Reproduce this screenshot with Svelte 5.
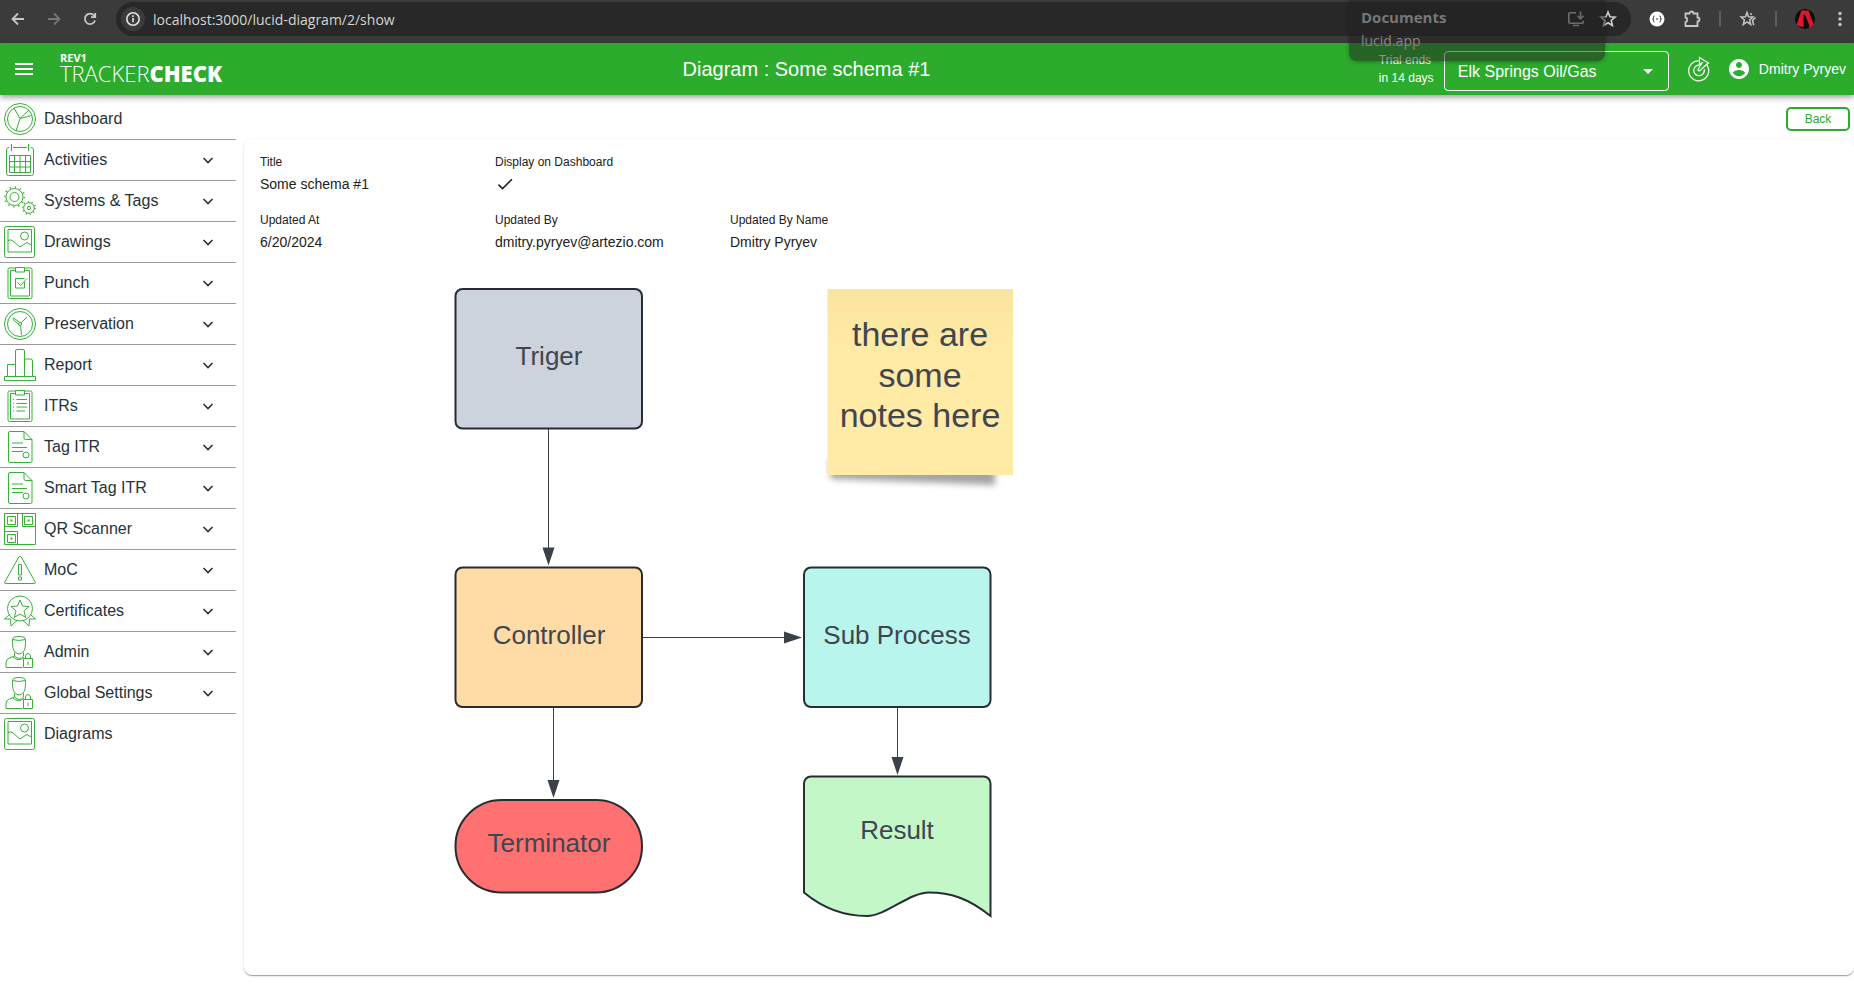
<script>

  let project = "Elk Springs Oil/Gas";

  const picture = `
    <rect x="0.5" y="0.5" width="30" height="31" rx="2" />
    <path d="M4 3.5h23.500v22.500h-23.500zM4 14.500q3-1.500 5 .500l7 6 6-4q2-1 3 1l2.500.500" />
    <circle cx="20.500" cy="10" r="4" />`;

  const clipboard = `
    <path d="M11.500 1h-6a1.500 1.500 0 0 0-1.500 1.500v27.500a1.500 1.500 0 0 0 1.500 1.500h21a1.500 1.500 0 0 0 1.500-1.500v-27.500a1.500 1.500 0 0 0-1.500-1.500h-6" />
    <path d="M11.500 3.500h-5v25.500h19v-25.500h-5M11.500.500h9v4.500h-9z" />`;

  const sheet = `
    <path d="M20 .5h-14a1.500 1.500 0 0 0-1.500 1.500v28a1.500 1.500 0 0 0 1.500 1.500h20.500a1.500 1.500 0 0 0 1.500-1.500v-21.500zv6.500a1.500 1.500 0 0 0 1.500 1.500h6.500" />
    <path d="M8 12h11M8 16.500h15M8 20.500h11" />
    <circle cx="22" cy="24" r="3" />`;

  const person = `
    <path d="M8.500 3.500q0-3 6.500-3t6.500 3c0 8 0 13-6.500 14.500-6.500-1.500-6.500-6.500-6.500-14.500zq6 2 13 0" />
    <path d="M10.500 16.500v3.500l-5 2q-3.500 1-3.500 5v4.500h16.500M10.500 20q5 5 9 0v-3.500M9 21q6 5.500 11 0" />
    <path d="M19.500 22.500h9v9h-9zM21.500 22v-2q.5-2.500 2.500-2.500t2.500 2.500v2.500M24 25.500v3.500" />`;

  const icons = {
    dashboard: `
      <circle cx="16" cy="16" r="15.500" /><circle cx="16" cy="16" r="12.500" />
      <path d="M16 15.500l-6-10.500M16 15.500l-4 12.500M16 15.500l9-8.500M16 15.500l11.500-3" />`,
    activities: `
      <path d="M7.500 0v7M24.500 0v7M9 3.500h14M5 3.500q-2.500 0-2.500 2.500v23.500q0 2 2 2h23q2 0 2-2v-23.500q0-2.500-2.500-2.500" />
      <path d="M5.500 11.500h21v17h-21zM10.500 11.500v17M16 11.500v17M21.500 11.500v17M5.500 17.500h21M5.500 23h21" />`,
    systems: `
      <circle cx="10.500" cy="12" r="8.500" /><circle cx="10.500" cy="12" r="4.500" />
      <circle cx="10.500" cy="12" r="9.800" stroke-width="1.800" stroke-dasharray="1.200 3.930" />
      <circle cx="25" cy="23" r="5.300" /><circle cx="25" cy="23" r="1.700" />
      <circle cx="25" cy="23" r="6.300" stroke-width="1.500" stroke-dasharray="1 2.958" />`,
    picture,
    punch: clipboard + `<path d="M20.500 15v6h-9v-9.500h9M13.500 15.500l3 3 6.500-7" />`,
    preservation: `
      <circle cx="16" cy="16" r="15.500" /><circle cx="16" cy="16" r="12.500" />
      <circle cx="16" cy="16" r="1.500" />
      <path d="M17 15l6-6M16.500 17l1 10M15 16.500l-6-5 .5-1.500 6.500 4.500" />`,
    report: `
      <path d="M.5 27.500h31v4h-31zM3.500 27.500v-12h8v12M11.500 27.500v-25.500q0-1.500 1.500-1.500h6q1.500 0 1.500 1.500v25.500M20.500 10h6q2 0 2 2v15.500" />`,
    itrs: clipboard + `<path d="M12.500 9.500h10.500M12.500 13.500h10.500M12.500 17h10.500M12.500 21h8.500M9 9.500h1M9 13.500h1M9 17h1M9 21h1" />`,
    sheet,
    qr: `
      <path d="M.5.500h31v31h-31zM13.500.500v13h-13M18.500.500v13h13M.5 18.500h13v13" />
      <path d="M3.500 3.500h8v8h-8zM20.500 3.500h8v8h-8zM3.500 21.500h8v8h-8z" />
      <path d="M6.500 7.500h2M23.500 7.500h2M6.500 25.500h2" stroke-width="2" />`,
    moc: `
      <path d="M14.800 3q1.200-2 2.400 0l14 25q.8 1.500-1 1.500h-28.400q-1.800 0-1-1.500z" />
      <path d="M14.500 10.500h3v10.500h-3zM14.500 23h3v3h-3z" />`,
    certificates: `
      <circle cx="16" cy="13.500" r="12.500" />
      <path d="M16 5l2.500 6 6.500.500-5 4.500 1.800 6.500-5.800-3.500-5.800 3.500 1.800-6.500-5-4.500 6.500-.500z" />
      <path d="M5 20l-4.500 4h6l.5 7 6.500-6M27 20l4.500 4h-6l-.5 7-6.500-6" />`,
    person
  };

  const menu = [
    { label: "Dashboard", icon: "dashboard", link: true },
    { label: "Activities", icon: "activities" },
    { label: "Systems & Tags", icon: "systems" },
    { label: "Drawings", icon: "picture" },
    { label: "Punch", icon: "punch" },
    { label: "Preservation", icon: "preservation" },
    { label: "Report", icon: "report" },
    { label: "ITRs", icon: "itrs" },
    { label: "Tag ITR", icon: "sheet" },
    { label: "Smart Tag ITR", icon: "sheet" },
    { label: "QR Scanner", icon: "qr" },
    { label: "MoC", icon: "moc" },
    { label: "Certificates", icon: "certificates" },
    { label: "Admin", icon: "person" },
    { label: "Global Settings", icon: "person" },
    { label: "Diagrams", icon: "picture", link: true }
  ];

</script>


<style>
  :global(body) {
    margin: 0;
    background-color: #fff;
    font-family: "Liberation Sans", Arial, sans-serif;
  }

  .page {
    min-height: 100vh;
    display: flex;
    flex-direction: column;
  }

  svg {
    display: block;
    flex: none;
  }

  button {
    font: inherit;
    color: inherit;
    background: none;
    border: none;
    padding: 0;
    cursor: pointer;
  }

  .browser {
    position: relative;
    height: 43px;
    display: flex;
    align-items: center;
    background-color: #3b3b3b;
    color: #c7c7c7;
    font-family: "Open Sans", "Noto Sans", sans-serif;
    font-size: 14px;
    box-sizing: border-box;
    padding: 0 7px 5px 10px;
  }

  .tools {
    display: flex;
    align-items: center;
    gap: 20px;
    width: 106px;
  }

  .tools .off {
    color: #777;
  }

  .address {
    flex: 1;
    height: 34px;
    display: flex;
    align-items: center;
    background-color: #282828;
    border-radius: 17px;
    box-sizing: border-box;
    padding: 0 14px 0 5px;
  }

  .site {
    width: 24px;
    height: 24px;
    display: flex;
    align-items: center;
    justify-content: center;
    border-radius: 50%;
    background-color: #3b3b3b;
    color: #e3e3e3;
    margin-right: 8px;
  }

  .address input {
    flex: 1;
    min-width: 0;
    font: inherit;
    color: #d5d5d5;
    background: none;
    border: none;
    padding: 0;
    outline: none;
  }

  .address .actions {
    display: flex;
    gap: 14px;
  }

  .extensions {
    display: flex;
    align-items: center;
    gap: 18px;
    margin-left: 18px;
  }

  .extensions i {
    width: 2px;
    height: 16px;
    background-color: #5c5c5c;
  }

  .hover-card {
    position: absolute;
    z-index: 3;
    top: 0;
    right: 249px;
    width: 256px;
    height: 61px;
    box-sizing: border-box;
    padding: 6px 12px;
    border-radius: 0 0 8px 8px;
    background-color: rgba(32, 32, 32, 0.5);
    box-shadow: 0 1px 4px rgba(0, 0, 0, 0.3);
    color: #858585;
    font-size: 14px;
    line-height: 23px;
    pointer-events: none;
  }

  .hover-card strong {
    display: block;
    font-size: 15px;
    font-weight: 700;
    color: #777;
  }

  header {
    position: relative;
    z-index: 1;
    height: 52px;
    display: flex;
    align-items: center;
    justify-content: space-between;
    box-sizing: border-box;
    padding: 0 8px 0 12px;
    background-color: #2cab2c;
    color: #fff;
    box-shadow: 0 2px 4px -1px rgba(0, 0, 0, 0.2), 0 4px 5px rgba(0, 0, 0, 0.14), 0 1px 10px rgba(0, 0, 0, 0.12);
  }

  .brand,
  .account,
  .user {
    display: flex;
    align-items: center;
  }

  .brand {
    gap: 24px;
    padding-right: 12px;
  }

  .logo {
    font-family: "Open Sans", "Noto Sans", sans-serif;
    font-size: 22px;
    font-weight: 300;
    line-height: 20px;
    color: #fff;
    text-decoration: none;
    padding-bottom: 3px;
  }

  .logo small {
    display: block;
    font-size: 11px;
    font-weight: 700;
    line-height: 10px;
  }

  .logo b {
    font-weight: 800;
  }

  h1 {
    font-size: 20px;
    font-weight: 400;
    line-height: 24px;
    margin: 0;
  }

  .trial {
    width: 55px;
    margin-right: 10px;
    font-size: 12px;
    line-height: 18px;
  }

  .project {
    position: relative;
    width: 225px;
    margin: 4px 18px 0 0;
  }

  .project select {
    width: 100%;
    height: 40px;
    appearance: none;
    font: inherit;
    font-size: 16px;
    color: #fff;
    background: none;
    border: 1px solid #fff;
    border-radius: 4px;
    padding: 0 32px 0 13px;
  }

  .project svg {
    position: absolute;
    top: 8px;
    right: 9px;
    pointer-events: none;
  }

  .user {
    gap: 8px;
    font-size: 14px;
    margin-left: 16px;
  }

  .body {
    flex: 1;
    display: flex;
  }

  nav {
    width: 236px;
    flex: none;
    padding-top: 4px;
  }

  ul {
    list-style: none;
    padding: 0;
    margin: 0;
  }

  li {
    border-bottom: 1px solid #9b9b9b;
  }

  li:last-child {
    border-bottom: none;
  }

  .item {
    width: 100%;
    height: 40px;
    display: flex;
    align-items: center;
    gap: 8px;
    box-sizing: border-box;
    padding: 0 20px 0 4px;
    font-size: 16px;
    line-height: 20px;
    color: #263238;
    text-decoration: none;
    text-align: left;
  }

  .item span {
    flex: 1;
  }

  .item:hover {
    background-color: rgba(0, 0, 0, 0.04);
  }

  .icon {
    fill: none;
    stroke: #36b036;
    stroke-width: 1;
  }

  main {
    flex: 1;
    min-width: 0;
    display: flex;
    flex-direction: column;
    padding: 12px 0 16px 8px;
  }

  .back {
    align-self: flex-end;
    width: 64px;
    height: 24px;
    margin: 0 4px 8px 0;
    border: 2px solid #2cab2c;
    border-radius: 5px;
    color: #2cab2c;
    font-size: 12px;
  }

  .card {
    flex: 1;
    padding: 15px 16px;
    border-radius: 8px;
    background-color: #fff;
    color: #212121;
    box-shadow: 0 2px 1px -1px rgba(0, 0, 0, 0.2), 0 1px 1px rgba(0, 0, 0, 0.14), 0 1px 3px rgba(0, 0, 0, 0.12);
  }

  dl {
    display: grid;
    grid-template-columns: repeat(3, 235px);
    row-gap: 18px;
    margin: 0 0 18px 0;
  }

  .wide {
    grid-column: span 2;
  }

  dt {
    font-size: 12px;
    line-height: 16px;
    margin-bottom: 4px;
  }

  dd {
    font-size: 14px;
    line-height: 20px;
    height: 20px;
    margin: 0;
  }

  .diagram {
    max-width: 100%;
  }

  .shape {
    stroke: #282c33;
    stroke-width: 2;
  }

  .link {
    stroke: #3a414a;
    stroke-width: 1;
    fill: none;
  }

  .head {
    fill: #3a414a;
  }

  .diagram text {
    fill: #3f4650;
    font-size: 26px;
    text-anchor: middle;
  }

  .diagram .note {
    font-size: 34px;
  }
</style>

<div class="page">
  <div class="browser">
    <div class="tools">
      <button type="button" aria-label="Back to previous page">
        <svg width="16" height="16" viewBox="0 0 16 16" fill="none" stroke="currentColor" stroke-width="1.800"><path d="M14 8H3M8 2.500L2.500 8 8 13.500" /></svg>
      </button>
      <button type="button" class="off" aria-label="Forward">
        <svg width="16" height="16" viewBox="0 0 16 16" fill="none" stroke="currentColor" stroke-width="1.800"><path d="M2 8h11M8 2.500L13.500 8 8 13.500" /></svg>
      </button>
      <button type="button" aria-label="Reload">
        <svg width="16" height="16" viewBox="0 0 16 16" fill="none" stroke="currentColor" stroke-width="1.800"><path d="M13 9.500A5.200 5.200 0 1 1 12 4.500l1 1.200M13.200 2v4.200H9" /></svg>
      </button>
    </div>
    <div class="address">
      <button type="button" class="site" aria-label="Site information">
        <svg width="16" height="16" viewBox="0 0 16 16" fill="none" stroke="currentColor" stroke-width="1.600"><circle cx="8" cy="8" r="6.200" /><path d="M8 7v4.200M8 4.300v1.700" /></svg>
      </button>
      <input aria-label="Address" value="localhost:3000/lucid-diagram/2/show" />
      <div class="actions">
        <svg width="18" height="18" viewBox="0 0 18 18" fill="none" stroke="#b8b8b8" stroke-width="1.600"><path d="M9 2.800H2.800a1 1 0 0 0-1 1v8.400a1 1 0 0 0 1 1h12.400a1 1 0 0 0 1-1v-1.500M6 15.500h6M13.500 1.500v7M10.500 5.800l3 3 3-3" /></svg>
        <svg width="18" height="18" viewBox="0 0 18 18" fill="none" stroke="#d0d0d0" stroke-width="1.600"><path d="M9 2l2 4.700 5 .5-3.800 3.300 1.200 5L9 12.800 4.600 15.500l1.200-5L2 7.200l5-.5z" /></svg>
      </div>
    </div>
    <div class="extensions">
      <svg width="16" height="16" viewBox="0 0 16 16"><circle cx="8" cy="8" r="7.500" fill="#fff" /><path d="M5.500 5q-1.300 0-1 1.500T3.500 8q1.300 0 1 1.500t1 1.500M10.500 5q1.300 0 1 1.500T12.500 8q-1.300 0-1 1.500t-1 1.500M6.800 8h2.400" fill="none" stroke="#333" /></svg>
      <svg width="18" height="18" viewBox="0 0 18 18" fill="none" stroke="#c7c7c7" stroke-width="1.800"><path d="M2.500 3.500h4a2 2 0 0 1 4 0h4v4a2 2 0 0 1 0 4v4.500h-12v-4a2.300 2.300 0 0 0 0-4.500z" /></svg>
      <i></i>
      <svg width="18" height="18" viewBox="0 0 18 18" fill="none" stroke="#c7c7c7" stroke-width="1.500"><path d="M8 2.500l1.500 4.200 4.500.3-3.400 3 1.100 4.500L8 12l-3.700 2.500 1.100-4.500L2 7l4.500-.3zM11.500 3l1 2M16.500 7.500l-3 2.800 1.200 5" /></svg>
      <i></i>
      <svg width="20" height="20" viewBox="0 0 20 20"><circle cx="10" cy="10" r="10" fill="#0b0b0b" /><path d="M1.500 15.500L6.500 1.500h7L18.500 15.500q-1.500 2.500-4 3.500L8.500 5 8.800 17.500Q4 18.500 1.500 15.500z" fill="#d9182d" /><path d="M8.500 5.500h1.500l4.500 11.500h-2z" fill="#0b0b0b" /></svg>
      <button type="button" aria-label="Browser menu">
        <svg width="14" height="16" viewBox="0 0 14 16" fill="#c7c7c7"><circle cx="7" cy="2.500" r="1.700" /><circle cx="7" cy="8" r="1.700" /><circle cx="7" cy="13.500" r="1.700" /></svg>
      </button>
    </div>
    <div class="hover-card"><strong>Documents</strong>lucid.app</div>
  </div>

  <header>
    <div class="brand">
      <button type="button" aria-label="Toggle menu">
        <svg width="24" height="24" viewBox="0 0 24 24" fill="#fff"><path d="M3 18h18v-2H3zm0-5h18v-2H3zm0-7v2h18V6z" /></svg>
      </button>
      <a class="logo" href="#home"><small>REV1</small>TRACKER<b>CHECK</b></a>
    </div>
    <h1>Diagram : Some schema #1</h1>
    <div class="account">
      <div class="trial">Trial ends<br />in 14 days</div>
      <div class="project">
        <select aria-label="Project" bind:value={project}>
          <option>Elk Springs Oil/Gas</option>
        </select>
        <svg width="24" height="24" viewBox="0 0 24 24" fill="#fff"><path d="M7 10l5 5 5-5z" /></svg>
      </div>
      <svg width="24" height="26" viewBox="0 0 24 26" fill="none" stroke="#fff" stroke-width="1.200">
        <path d="M12.500 4.800A10 10 0 1 0 20 9.200" />
        <path d="M13 9.200a5.300 5.300 0 1 0 4.200 4" />
        <path d="M12.500 1.500v6.800L15 7l-3.800 6q-.8 2.500 1.500 1.800L19 9l2.500-2z" />
      </svg>
      <div class="user">
        <svg width="24" height="24" viewBox="0 0 24 24" fill="#fff"><path d="M12 2C6.480 2 2 6.480 2 12s4.480 10 10 10 10-4.480 10-10S17.520 2 12 2zm0 3c1.660 0 3 1.340 3 3s-1.340 3-3 3-3-1.340-3-3 1.340-3 3-3zm0 14.200c-2.500 0-4.710-1.280-6-3.220.03-1.990 4-3.080 6-3.080 1.990 0 5.970 1.090 6 3.080-1.290 1.940-3.500 3.220-6 3.220z" /></svg>
        Dmitry Pyryev
      </div>
    </div>
  </header>

  <div class="body">
    <nav>
      <ul>
        {#each menu as row}
          <li>
            {#if row.link}
              <a class="item" href="#{row.label}">
                <svg class="icon" width="32" height="32" viewBox="0 0 32 32">{@html icons[row.icon]}</svg>
                <span>{row.label}</span>
              </a>
            {:else}
              <button type="button" class="item">
                <svg class="icon" width="32" height="32" viewBox="0 0 32 32">{@html icons[row.icon]}</svg>
                <span>{row.label}</span>
                <svg width="16" height="16" viewBox="0 0 16 16" fill="none" stroke="#263238" stroke-width="1.600"><path d="M3.500 6L8 10.500 12.500 6" /></svg>
              </button>
            {/if}
          </li>
        {/each}
      </ul>
    </nav>

    <main>
      <button type="button" class="back">Back</button>
      <section class="card">
        <dl>
          <div>
            <dt>Title</dt>
            <dd>Some schema #1</dd>
          </div>
          <div class="wide">
            <dt>Display on Dashboard</dt>
            <dd>
              <svg width="20" height="20" viewBox="0 0 24 24" fill="#212121" role="img" aria-label="Yes"><path d="M9 16.170L4.830 12l-1.420 1.410L9 19 21 7l-1.410-1.410z" /></svg>
            </dd>
          </div>
          <div>
            <dt>Updated At</dt>
            <dd>6/20/2024</dd>
          </div>
          <div>
            <dt>Updated By</dt>
            <dd>dmitry.pyryev@artezio.com</dd>
          </div>
          <div>
            <dt>Updated By Name</dt>
            <dd>Dmitry Pyryev</dd>
          </div>
        </dl>

        <svg class="diagram" width="780" height="670" viewBox="260 270 780 670">
          <defs>
            <linearGradient id="paper" x1="0" y1="0" x2="0" y2="1">
              <stop offset="0" stop-color="#f9e4a0" />
              <stop offset="0.35" stop-color="#ffeaa6" />
            </linearGradient>
            <filter id="soft" x="-10%" y="-10%" width="120%" height="150%">
              <feGaussianBlur stdDeviation="3" />
            </filter>
          </defs>

          <path class="link" d="M548.500 429v120M553.500 708v74M643 637.500h144M897.500 708v50" />
          <path class="head" d="M542.500 547.500h12l-6 18zM547.500 780h12l-6 18zM784 631.500v12l18-6zM891.500 757h12l-6 18z" />

          <rect class="shape" x="455.500" y="289" width="186.500" height="139.500" rx="7" fill="#ccd3dc" />
          <text x="549" y="365">Triger</text>

          <rect class="shape" x="455.500" y="567.500" width="186.500" height="139.500" rx="7" fill="#ffdca6" />
          <text x="549" y="644">Controller</text>

          <rect class="shape" x="804" y="567.500" width="186.500" height="139.500" rx="7" fill="#b8f5ed" />
          <text x="897" y="644">Sub Process</text>

          <rect class="shape" x="455.500" y="800" width="186.500" height="92.500" rx="46" fill="#ff7070" />
          <text x="549" y="852">Terminator</text>

          <path class="shape" fill="#c3f7c8" d="M804 892.500V783.500a7 7 0 0 1 7-7h172.500a7 7 0 0 1 7 7V916C968 898 950 892.500 929 892.500C909 892.500 886 916 867 916C845 916 825 910 804 892.500z" />
          <text x="897" y="839">Result</text>

          <path d="M829 460h166v25q-80-3-164-6z" fill="#55595f" opacity="0.550" filter="url(#soft)" />
          <path d="M827.500 289h185.500v186h-185.500z" fill="url(#paper)" />
          <text class="note" x="920" y="346">there are</text>
          <text class="note" x="920" y="387">some</text>
          <text class="note" x="920" y="427">notes here</text>
        </svg>
      </section>
    </main>
  </div>
</div>
